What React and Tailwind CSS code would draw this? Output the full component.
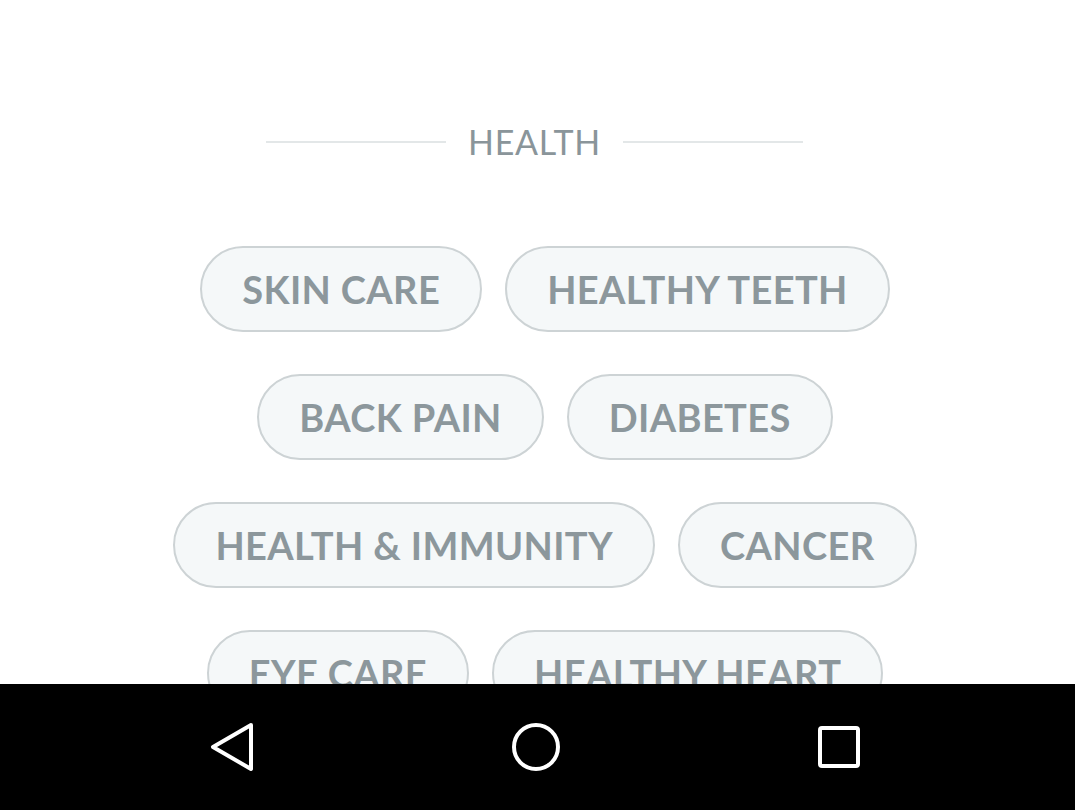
const rows = [
  ["SKIN CARE", "HEALTHY TEETH"],
  ["BACK PAIN", "DIABETES"],
  ["HEALTH & IMMUNITY", "CANCER"],
  ["EYE CARE", "HEALTHY HEART"],
];

const Chip = ({ label }) => (
  <div className="h-[86px] px-[40px] rounded-full border-2 border-[#cdd3d5] bg-[#f5f8f9] flex items-center justify-center shrink-0">
    <span className="text-[38px] font-bold tracking-[0.01em] text-[#8c979c] leading-none whitespace-nowrap">
      {label}
    </span>
  </div>
);

export default function App() {
  return (
    <div
      className="w-[1075px] h-[810px] bg-white flex flex-col overflow-hidden"
      style={{ fontFamily: "Lato, 'Open Sans', sans-serif" }}
    >
      <div className="flex-1 overflow-hidden">
        <div className="pt-[125px] pr-[6px] flex items-center justify-center gap-[22px]">
          <div className="w-[180px] h-[2px] bg-[#e3e7e8]" />
          <span className="text-[34px] text-[#8a959a] tracking-[0.02em] leading-none">HEALTH</span>
          <div className="w-[180px] h-[2px] bg-[#e3e7e8]" />
        </div>
        <div className="mt-[87px] pl-[15px] flex flex-col items-center gap-[42px]">
          {rows.map((row, i) => (
            <div key={i} className="flex gap-[23px]">
              {row.map((label) => (
                <Chip key={label} label={label} />
              ))}
            </div>
          ))}
        </div>
      </div>
      <div className="h-[126px] bg-black flex items-center shrink-0">
        <div className="ml-[210px] w-[650px] flex items-center justify-between">
          <svg width="44" height="50" viewBox="0 0 44 50" fill="none">
            <path d="M41 3 L3 25 L41 47 Z" stroke="#fff" strokeWidth="4" strokeLinejoin="round" />
          </svg>
          <svg width="48" height="48" viewBox="0 0 48 48" fill="none">
            <circle cx="24" cy="24" r="22" stroke="#fff" strokeWidth="4" />
          </svg>
          <svg width="42" height="42" viewBox="0 0 42 42" fill="none">
            <rect x="2" y="2" width="38" height="38" rx="2" stroke="#fff" strokeWidth="4" />
          </svg>
        </div>
      </div>
    </div>
  );
}
